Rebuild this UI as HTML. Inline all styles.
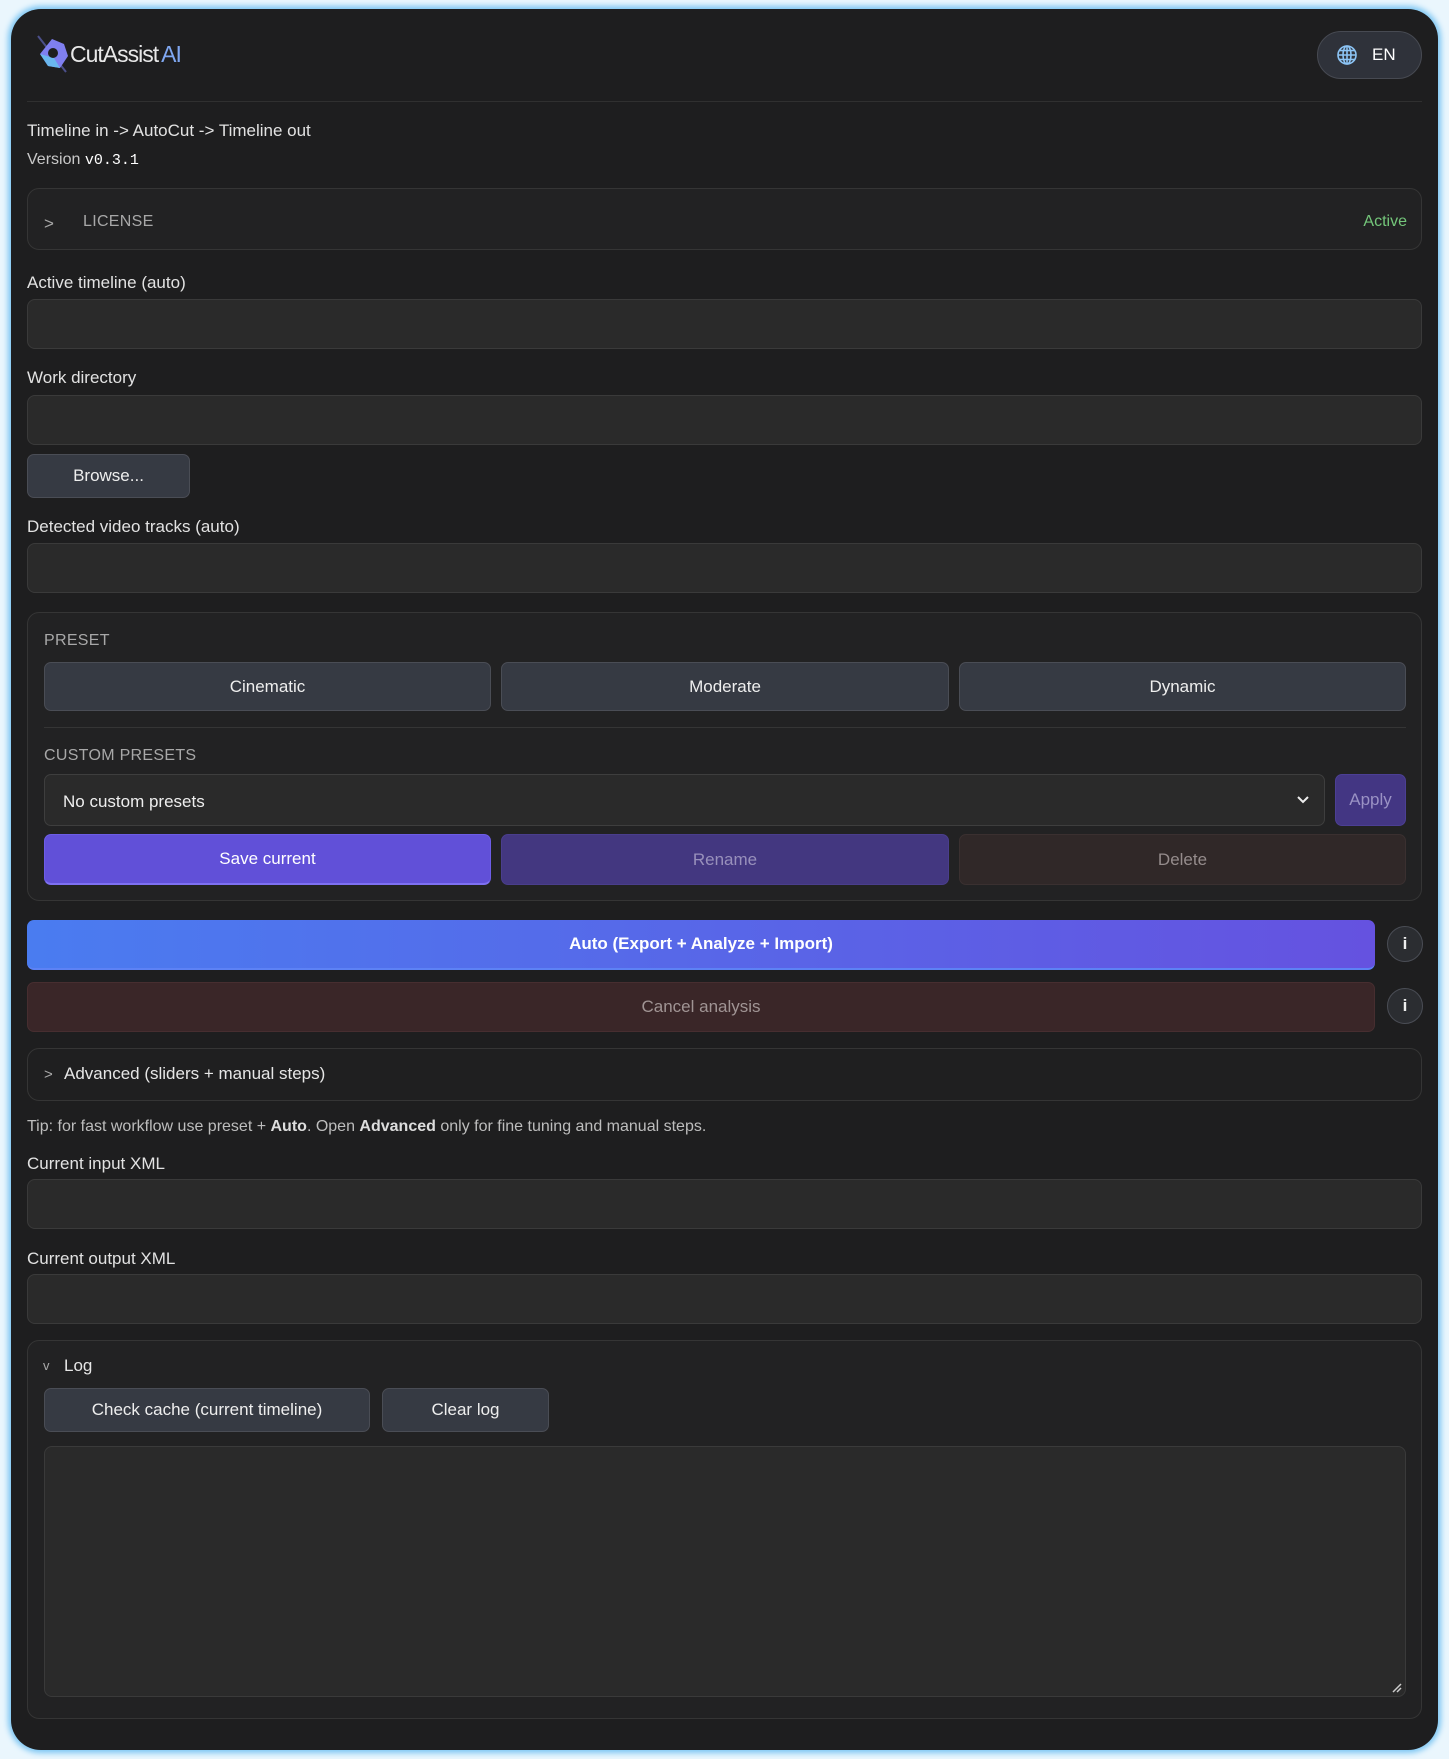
<!DOCTYPE html>
<html><head><meta charset="utf-8"><style>
*{box-sizing:border-box;margin:0;padding:0}
html,body{width:1449px;height:1759px;overflow:hidden;background:#eaf6fd;font-family:"Liberation Sans",sans-serif;color:#e6e6e6}
.panel{position:absolute;left:11px;top:9px;width:1427px;height:1741px;background:#1e1e1f;border-radius:30px;box-shadow:0 0 6px 3px #7cc6f3}
.a{position:absolute}
.lbl{position:absolute;left:27px;font-size:17px;color:#e2e2e2;margin-top:2px}
.inp{position:absolute;left:27px;width:1395px;height:50px;background:#2a2a2a;border:1px solid #3a3a3a;border-radius:8px}
.btn{position:absolute;background:#363a43;border:1px solid #4a4d55;border-radius:7px;display:flex;align-items:center;justify-content:center;font-size:17px;color:#eee}
.box{position:absolute;left:27px;width:1395px;background:#222223;border:1px solid #353535;border-radius:12px}
.cap{position:absolute;font-size:16px;color:#a8a8a8;letter-spacing:.3px}
.info{position:absolute;width:36px;height:36px;border-radius:50%;background:#2b2d31;border:1px solid #4a4d55;color:#eee;font-weight:bold;font-size:17px;display:flex;align-items:center;justify-content:center}
</style></head><body>
<div class="panel"></div>
<svg class="a" style="left:34px;top:34px" width="40" height="40" viewBox="0 0 40 40">
<line x1="4" y1="2" x2="32" y2="38" stroke="#4b4f8a" stroke-width="2"/>
<path d="M18 5 L30 10 L34 22 L26 34 L14 32 L6 20 Z" fill="#7f7ff0"/>
<path d="M6 20 L14 32 L26 34 L20 24 Z" fill="#6ab7ee"/>
<circle cx="19" cy="19" r="5" fill="#1e1e1f"/>
</svg>
<div class="a" style="left:70px;top:41px;font-size:23px;letter-spacing:-1px;color:#e8e8e8">CutAssist<span style="color:#7fa7f0;margin-left:3px">AI</span></div>
<div class="a" style="left:1317px;top:31px;width:105px;height:48px;border-radius:24px;background:#2f323a;border:1px solid #474a52;display:flex;align-items:center;padding-left:18px;font-size:17px;color:#fff">
<svg width="22" height="22" viewBox="0 0 22 22" style="margin-right:14px"><g fill="none" stroke="#8cc4f5" stroke-width="1.6"><circle cx="11" cy="11" r="9"/><ellipse cx="11" cy="11" rx="4" ry="9"/><line x1="2" y1="11" x2="20" y2="11"/><line x1="3.5" y1="6.5" x2="18.5" y2="6.5"/><line x1="3.5" y1="15.5" x2="18.5" y2="15.5"/><line x1="11" y1="2" x2="11" y2="20"/></g></svg>EN</div>
<div class="a" style="left:27px;top:101px;width:1395px;height:1px;background:#303030"></div>
<div class="lbl" style="top:119px">Timeline in -&gt; AutoCut -&gt; Timeline out</div>
<div class="lbl" style="top:149px;font-size:16px;color:#c8c8c8">Version <span style="font-family:'Liberation Mono',monospace;color:#fff;font-size:15px">v0.3.1</span></div>
<div class="box" style="top:188px;height:62px"></div>
<div class="cap" style="left:44px;top:214px;font-size:17px">&gt;</div>
<div class="cap" style="left:83px;top:213px">LICENSE</div>
<div class="a" style="right:42px;top:213px;font-size:16px;color:#74c67a">Active</div>
<div class="lbl" style="top:271px">Active timeline (auto)</div>
<div class="inp" style="top:299px"></div>
<div class="lbl" style="top:366px">Work directory</div>
<div class="inp" style="top:395px"></div>
<div class="btn" style="left:27px;top:454px;width:163px;height:44px">Browse...</div>
<div class="lbl" style="top:515px">Detected video tracks (auto)</div>
<div class="inp" style="top:543px"></div>
<div class="box" style="top:612px;height:289px"></div>
<div class="cap" style="left:44px;top:632px">PRESET</div>
<div class="btn" style="left:44px;top:662px;width:447px;height:49px">Cinematic</div>
<div class="btn" style="left:501px;top:662px;width:448px;height:49px">Moderate</div>
<div class="btn" style="left:959px;top:662px;width:447px;height:49px">Dynamic</div>
<div class="a" style="left:44px;top:727px;width:1362px;height:1px;background:#353535"></div>
<div class="cap" style="left:44px;top:747px">CUSTOM PRESETS</div>
<div class="a" style="left:44px;top:774px;width:1281px;height:52px;background:#2a2a2a;border:1px solid #3e3e3e;border-radius:7px;font-size:17px;color:#eee;padding:17px 0 0 18px">No custom presets
<svg class="a" style="right:14px;top:20px" width="14" height="10" viewBox="0 0 14 10"><path d="M2 2 L7 7 L12 2" fill="none" stroke="#eee" stroke-width="2"/></svg></div>
<div class="btn" style="left:1335px;top:774px;width:71px;height:52px;background:#433683;border-color:#4c3f94;color:#9a92c4">Apply</div>
<div class="btn" style="left:44px;top:834px;width:447px;height:51px;background:#6150d8;border-color:#6d5de6;border-bottom:2px solid #7e70f2;color:#fff">Save current</div>
<div class="btn" style="left:501px;top:834px;width:448px;height:51px;background:#433780;border-color:#4a3e8c;color:#9890bb">Rename</div>
<div class="btn" style="left:959px;top:834px;width:447px;height:51px;background:#302828;border-color:#3a3030;color:#958c8c">Delete</div>
<div class="btn" style="left:27px;top:920px;width:1348px;height:50px;background:linear-gradient(90deg,#4a7cf0,#6552e0);border:none;border-bottom:2px solid #5d82f5;color:#fff;font-weight:bold">Auto (Export + Analyze + Import)</div>
<div class="info" style="left:1387px;top:926px">i</div>
<div class="btn" style="left:27px;top:982px;width:1348px;height:50px;background:#3a2628;border-color:#472e30;color:#a09494">Cancel analysis</div>
<div class="info" style="left:1387px;top:988px">i</div>
<div class="box" style="top:1048px;height:53px;background:#1f1f20"></div>
<div class="a" style="left:44px;top:1066px;font-size:15px;color:#aaa">&gt;</div>
<div class="a" style="left:64px;top:1064px;font-size:17px;color:#e6e6e6">Advanced (sliders + manual steps)</div>
<div class="lbl" style="top:1116px;font-size:16px;color:#bdbdbd">Tip: for fast workflow use preset + <b style="color:#ddd">Auto</b>. Open <b style="color:#ddd">Advanced</b> only for fine tuning and manual steps.</div>
<div class="lbl" style="top:1152px">Current input XML</div>
<div class="inp" style="top:1179px"></div>
<div class="lbl" style="top:1247px">Current output XML</div>
<div class="inp" style="top:1274px"></div>
<div class="box" style="top:1340px;height:379px"></div>
<div class="a" style="left:43px;top:1358px;font-size:13px;color:#aaa">v</div>
<div class="a" style="left:64px;top:1356px;font-size:17px;color:#e6e6e6">Log</div>
<div class="btn" style="left:44px;top:1388px;width:326px;height:44px">Check cache (current timeline)</div>
<div class="btn" style="left:382px;top:1388px;width:167px;height:44px">Clear log</div>
<div class="a" style="left:44px;top:1446px;width:1362px;height:251px;background:#2a2a2a;border:1px solid #3a3a3a;border-radius:8px"></div>
<svg class="a" style="left:1392px;top:1683px" width="10" height="10" viewBox="0 0 10 10"><path d="M1 9 L9 1 M5 9 L9 5" stroke="#ccc" stroke-width="1.5"/></svg>
</body></html>
